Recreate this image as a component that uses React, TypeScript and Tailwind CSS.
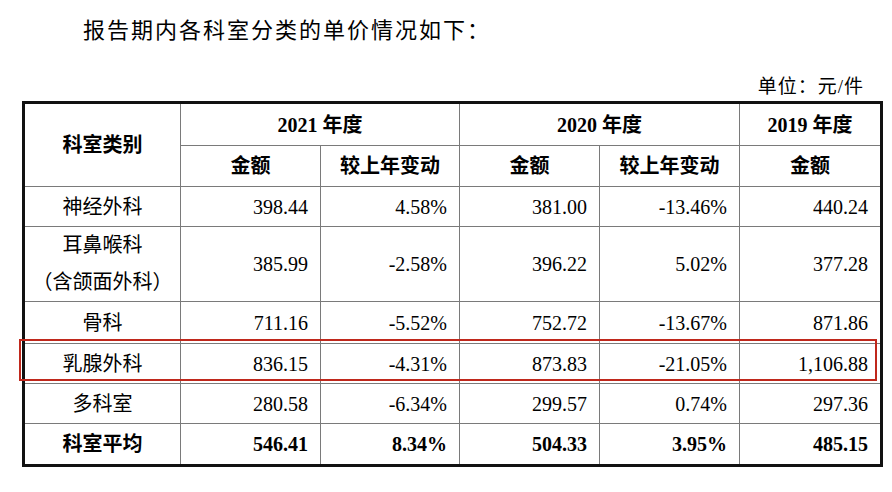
import React from 'react';

type Row = { name: React.ReactNode; v: string[]; h: string; bold?: boolean };

const rows: Row[] = [
  { name: '神经外科', v: ['398.44', '4.58%', '381.00', '-13.46%', '440.24'], h: 'h-[40px]' },
  {
    name: (
      <span className="block leading-[37px]">
        耳鼻喉科
        <br />
        （含颌面外科）
      </span>
    ),
    v: ['385.99', '-2.58%', '396.22', '5.02%', '377.28'],
    h: 'h-[74px]',
  },
  { name: '骨科', v: ['711.16', '-5.52%', '752.72', '-13.67%', '871.86'], h: 'h-[42px]' },
  { name: '乳腺外科', v: ['836.15', '-4.31%', '873.83', '-21.05%', '1,106.88'], h: 'h-[40px]' },
  { name: '多科室', v: ['280.58', '-6.34%', '299.57', '0.74%', '297.36'], h: 'h-[40px]' },
  { name: '科室平均', v: ['546.41', '8.34%', '504.33', '3.95%', '485.15'], h: 'h-[42px]', bold: true },
];

const cell = 'border border-[#7a7a7a] p-0';

const App: React.FC = () => {
  return (
    <div className="relative w-[892px] h-[492px] bg-white text-black font-['Liberation_Serif','Noto_Sans_CJK_SC',serif]">
      <p className="pl-[83px] pt-[15px] text-[22px] leading-[32px] tracking-[2px]">报告期内各科室分类的单价情况如下：</p>
      <p className="mt-[27px] pr-[28px] text-right text-[19px] leading-[26px] tracking-[1px]">单位：元/件</p>

      <table className="ml-[22px] mt-[1px] w-[858px] table-fixed border-collapse border-[3px] border-[#111] text-[20px]">
        <colgroup>
          <col className="w-[157px]" />
          <col className="w-[140px]" />
          <col className="w-[139px]" />
          <col className="w-[140px]" />
          <col className="w-[140px]" />
          <col className="w-[142px]" />
        </colgroup>
        <thead className="font-bold">
          <tr className="h-[43px]">
            <th rowSpan={2} className={`${cell} text-center font-bold`}>科室类别</th>
            <th colSpan={2} className={`${cell} text-center font-bold`}>2021 年度</th>
            <th colSpan={2} className={`${cell} text-center font-bold`}>2020 年度</th>
            <th className={`${cell} text-center font-bold`}>2019 年度</th>
          </tr>
          <tr className="h-[41px]">
            <th className={`${cell} text-center font-bold`}>金额</th>
            <th className={`${cell} text-center font-bold`}>较上年变动</th>
            <th className={`${cell} text-center font-bold`}>金额</th>
            <th className={`${cell} text-center font-bold`}>较上年变动</th>
            <th className={`${cell} text-center font-bold`}>金额</th>
          </tr>
        </thead>
        <tbody>
          {rows.map((r, i) => (
            <tr key={i} className={`${r.h} ${r.bold ? 'font-bold' : ''}`}>
              <td className={`${cell} text-center`}>{r.name}</td>
              {r.v.map((x, j) => (
                <td key={j} className={`${cell} pr-[12px] text-right`}>
                  {x}
                </td>
              ))}
            </tr>
          ))}
        </tbody>
      </table>

      {/* highlight box over the 乳腺外科 row */}
      <div className="pointer-events-none absolute left-[19px] top-[339px] h-[42px] w-[858px] border-2 border-[#c0281c]" />
    </div>
  );
};

export default App;
